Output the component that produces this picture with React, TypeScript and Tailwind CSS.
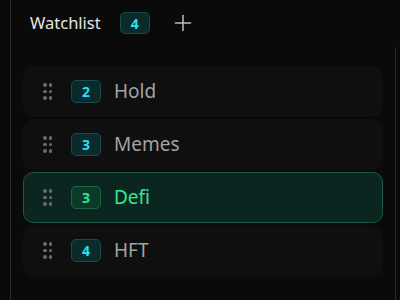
import { Plus } from "lucide-react";

const lists = [
  { name: "Hold", count: 2, active: false },
  { name: "Memes", count: 3, active: false },
  { name: "Defi", count: 3, active: true },
  { name: "HFT", count: 4, active: false },
];

function Handle() {
  return (
    <div className="grid grid-cols-2 gap-x-[2px] gap-y-[3px]">
      {Array.from({ length: 6 }).map((_, i) => (
        <span key={i} className="w-[3.5px] h-[3.5px] rounded-full bg-[#6b6b6b]" />
      ))}
    </div>
  );
}

export default function App() {
  return (
    <div
      className="w-[400px] h-[300px] bg-[#0a0a0a] flex overflow-hidden"
      style={{ fontFamily: '"Noto Sans", "Open Sans", sans-serif' }}
    >
      {/* left rail */}
      <div className="w-[11px] border-r border-[#2a2a2a]" />

      <div className="flex-1 flex flex-col">
        {/* Header */}
        <div className="h-[47px] flex items-center pl-[19px] pb-[1px]">
          <span className="text-[16.5px] text-[#e4e4e4]">Watchlist</span>
          <span className="ml-[19px] w-[30px] h-[22px] rounded-[5px] bg-[#0b2a2c] border border-[#1b4a4c] flex items-center justify-center text-[14px] font-bold text-[#22e3f2]">
            4
          </span>
          <Plus className="ml-[20px] text-[#bdbdbd]" size={26} strokeWidth={1.4} />
        </div>

        <div className="flex-1 flex">
          <div className="flex-1 flex flex-col gap-[2px] pt-[19px] pl-[12px] pr-[12px]">
            {lists.map((l) => (
              <div
                key={l.name}
                className={`h-[51px] rounded-[10px] flex items-center pl-[19px] border ${
                  l.active
                    ? "bg-[#0b2620] border-[#1b5a40]"
                    : "bg-[#0f0f0f] border-transparent"
                }`}
              >
                <Handle />
                <span
                  className={`ml-[19px] w-[30px] h-[23px] rounded-[5px] border flex items-center justify-center text-[14px] font-bold ${
                    l.active
                      ? "bg-[#0d3a28] border-[#1b6445] text-[#2ee88e]"
                      : "bg-[#0b2a2c] border-[#1b4a4c] text-[#22e3f2]"
                  }`}
                >
                  {l.count}
                </span>
                <span
                  className={`ml-[13px] text-[19px] ${
                    l.active ? "text-[#34e88e]" : "text-[#a3a3a3]"
                  }`}
                >
                  {l.name}
                </span>
              </div>
            ))}
          </div>
          {/* right rail */}
          <div className="w-[5px] border-l border-[#2a2a2a]" />
        </div>
      </div>
    </div>
  );
}
